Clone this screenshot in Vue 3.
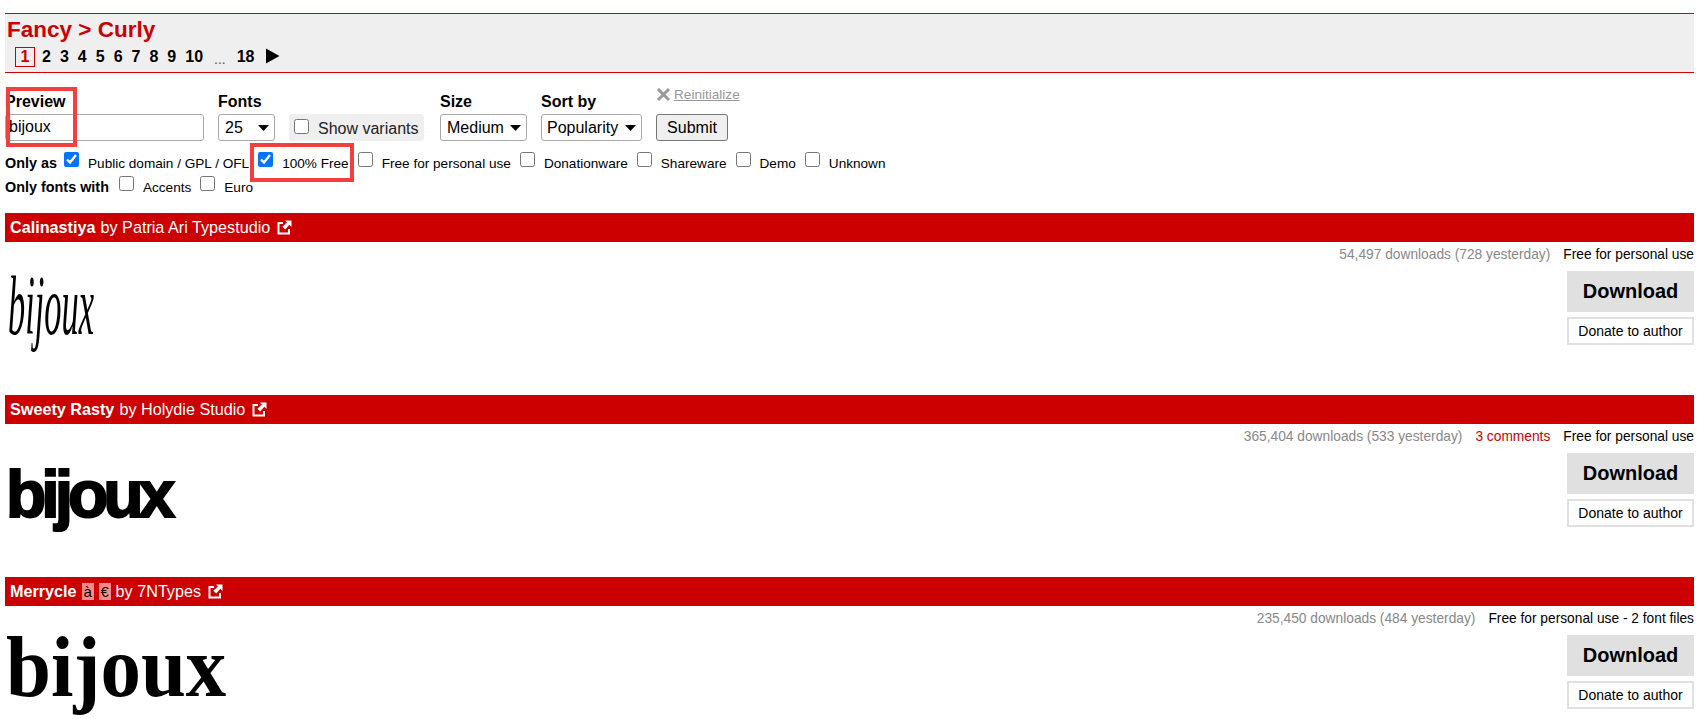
<script setup>
const pages = ["2", "3", "4", "5", "6", "7", "8", "9", "10"];

const licences = [
	{ name: "Public domain / GPL / OFL", checked: true },
	{ name: "100% Free", checked: true },
	{ name: "Free for personal use", checked: false },
	{ name: "Donationware", checked: false },
	{ name: "Shareware", checked: false },
	{ name: "Demo", checked: false },
	{ name: "Unknown", checked: false },
];

const fonts = [
	{
		name: "Calinastiya",
		author: "Patria Ari Typestudio",
		downloads: "54,497 downloads (728 yesterday)",
		licence: "Free for personal use",
		sample: "script",
	},
	{
		name: "Sweety Rasty",
		author: "Holydie Studio",
		downloads: "365,404 downloads (533 yesterday)",
		comments: "3 comments",
		licence: "Free for personal use",
		sample: "blobby",
	},
	{
		name: "Merrycle",
		author: "7NTypes",
		downloads: "235,450 downloads (484 yesterday)",
		licence: "Free for personal use - 2 font files",
		sample: "didone",
		badges: true,
	},
];
</script>

<template>
	<div class="page">
		<div class="heading">
			<div class="title">Fancy &gt; Curly</div>
			<div class="pager">
				<span class="current">1</span>
				<a v-for="p in pages" :key="p">{{ p }}</a>
				<span class="dots">...</span>
				<a>18</a>
				<svg class="next" width="15" height="16" viewBox="0 0 15 16">
					<path d="M1 0.5 L14.5 8 L1 15.5 Z" fill="#000" />
				</svg>
			</div>
		</div>

		<form class="filters" @submit.prevent>
			<div class="field preview-field">
				<label>Preview</label>
				<input class="text" type="text" value="bijoux" />
			</div>
			<div class="field fonts-field">
				<label>Fonts</label>
				<div class="inline">
					<select><option>25</option></select>
					<span class="variants"><input type="checkbox" /> Show variants</span>
				</div>
			</div>
			<div class="field size-field">
				<label>Size</label>
				<select><option>Medium</option></select>
			</div>
			<div class="field sort-field">
				<label>Sort by</label>
				<select><option>Popularity</option></select>
			</div>
			<div class="field submit-field">
				<a class="reset">
					<svg width="15" height="15" viewBox="0 0 15 15">
						<path d="M2 2 L13 13 M13 2 L2 13" stroke="#999" stroke-width="3" />
					</svg>
					<span>Reinitialize</span>
				</a>
				<button type="button">Submit</button>
			</div>
		</form>

		<div class="options">
			<b>Only as</b>
			<label v-for="l in licences" :key="l.name">
				<input type="checkbox" :checked="l.checked" />
				<span>{{ l.name }}</span>
			</label>
		</div>
		<div class="options">
			<b>Only fonts with</b>
			<label><input type="checkbox" /><span>Accents</span></label>
			<label><input type="checkbox" /><span>Euro</span></label>
		</div>

		<div class="fontlist">
			<div class="font" v-for="f in fonts" :key="f.name">
				<div class="bar">
					<b>{{ f.name }}</b>
					<template v-if="f.badges">
						<span class="badge">à</span>
						<span class="badge">€</span>
					</template>
					<span>by {{ f.author }}</span>
					<svg class="ext" width="15" height="15" viewBox="0 0 15 15">
						<path d="M6 3 H1.5 V13.5 H12 V9" fill="none" stroke="#fff" stroke-width="2" />
						<path d="M8 0.5 H14.5 V7 L12.3 4.8 L8.2 9.6 L5.4 6.8 L9.9 2.5 Z" fill="#fff" />
					</svg>
				</div>
				<div class="meta">
					<span class="downloads">{{ f.downloads }}</span>
					<a v-if="f.comments" class="comments">{{ f.comments }}</a>
					<span>{{ f.licence }}</span>
				</div>
				<div class="body">
					<div class="sample" :class="f.sample">bijoux</div>
					<div class="actions">
						<a class="download">Download</a>
						<a class="donate">Donate to author</a>
					</div>
				</div>
			</div>
		</div>

		<div class="mark mark-preview"></div>
		<div class="mark mark-free"></div>
	</div>
</template>

<style scoped>
	.page {
		position: relative;
		height: 719px;
		overflow: hidden;
		padding: 13px 10px 0 5px;
		box-sizing: border-box;
		font-family: "Liberation Sans", Arial, sans-serif;
		color: #000;
	}

	.heading {
		height: 60px;
		box-sizing: border-box;
		background: #efefef;
		border-top: 1px solid #c00;
		border-bottom: 1px solid #c00;
		padding: 3px 0 0 2px;
	}

	.title {
		font-size: 22.5px;
		font-weight: bold;
		line-height: 26px;
		color: #c00;
	}

	.pager {
		display: flex;
		align-items: center;
		height: 20px;
		margin: 4px 0 0 8px;
		font-size: 16px;
		font-weight: bold;
	}

	.pager a {
		margin-right: 9px;
	}

	.current {
		width: 20px;
		height: 20px;
		box-sizing: border-box;
		line-height: 18px;
		text-align: center;
		border: 1px solid #c00;
		color: #c00;
		margin-right: 7px;
	}

	.dots {
		font-size: 14px;
		font-weight: normal;
		color: #555;
		margin: 4px 11px 0 2px;
	}

	.next {
		margin: -3px 0 0 1px;
	}

	.filters {
		display: flex;
		margin-top: 14px;
		height: 56px;
	}

	.field {
		display: flex;
		flex-direction: column;
		align-items: flex-start;
	}

	.field label {
		font-size: 16px;
		font-weight: bold;
		line-height: 20px;
		margin-top: 5px;
		margin-bottom: 2px;
	}

	.inline {
		display: flex;
		align-items: center;
	}

	.text {
		width: 199px;
		height: 27px;
		box-sizing: border-box;
		border: 1px solid #a9a9a9;
		border-radius: 3px;
		padding: 0 3px 2px;
		font: 16px "Liberation Sans", Arial, sans-serif;
	}

	select {
		appearance: none;
		height: 27px;
		box-sizing: border-box;
		border: 1px solid #a9a9a9;
		border-radius: 3px;
		padding: 0 0 0 6px;
		background: #fff url("data:image/svg+xml,%3Csvg xmlns='http://www.w3.org/2000/svg' width='11' height='6'%3E%3Cpath d='M0 0H11L5.5 6Z'/%3E%3C/svg%3E") no-repeat right 5px center;
		font: 16px "Liberation Sans", Arial, sans-serif;
		color: #000;
	}

	.preview-field {
		width: 213px;
	}

	.fonts-field {
		width: 222px;
	}

	.fonts-field select {
		width: 57px;
	}

	.variants {
		display: flex;
		align-items: center;
		height: 27px;
		box-sizing: border-box;
		margin-left: 14px;
		padding: 3px 5px 0;
		background: #efefef;
		border-radius: 3px;
		font-size: 16px;
		color: #222;
	}

	.variants input {
		width: 15px;
		height: 15px;
		margin: 0 9px 5px 0;
	}

	.size-field {
		width: 101px;
	}

	.size-field select {
		width: 87px;
	}

	.sort-field {
		width: 115px;
	}

	.sort-field select {
		width: 101px;
		padding-left: 5px;
	}

	.reset {
		display: flex;
		align-items: center;
		gap: 3px;
		height: 20px;
		margin-top: -3px;
		margin-bottom: 10px;
		font-size: 13.6px;
		color: #999;
	}

	.reset span {
		text-decoration: underline;
	}

	button {
		width: 72px;
		height: 27px;
		padding: 0;
		box-sizing: border-box;
		border: 1px solid #767676;
		border-radius: 3px;
		background: #efefef;
		font: 16px "Liberation Sans", Arial, sans-serif;
		color: #000;
	}

	.filters + .options {
		margin-top: 8px;
	}

	.filters + .options b {
		margin-right: -2px;
	}

	.options {
		display: flex;
		align-items: center;
		height: 24px;
		font-size: 14.4px;
	}

	.options b {
		margin-right: 1px;
	}

	.options label {
		display: flex;
		align-items: center;
	}

	.options input {
		width: 15px;
		height: 15px;
		margin: 0 9px 7px 9px;
		accent-color: #0075ff;
	}

	.options span {
		font-size: 13.6px;
	}

	.fontlist {
		margin-top: 14px;
	}

	.font {
		height: 182px;
	}

	.bar {
		display: flex;
		align-items: center;
		gap: 5px;
		height: 29px;
		padding-left: 5px;
		background: #c00;
		color: #fff;
		font-size: 16.2px;
	}

	.badge {
		width: 12px;
		height: 17px;
		line-height: 17px;
		text-align: center;
		background: #f88;
		color: #000;
		font-size: 15px;
	}

	.ext {
		margin-left: 2px;
	}

	.meta {
		display: flex;
		justify-content: flex-end;
		gap: 13px;
		height: 28px;
		line-height: 26px;
		font-size: 13.75px;
	}

	.downloads {
		color: #888;
	}

	.comments {
		color: #c00;
	}

	.body {
		display: flex;
		justify-content: space-between;
	}

	.actions {
		display: flex;
		flex-direction: column;
		gap: 5px;
		width: 127px;
		margin-top: 1px;
	}

	.download {
		height: 41px;
		line-height: 41px;
		text-align: center;
		background: #e0e0e0;
		font-size: 20px;
		font-weight: bold;
	}

	.donate {
		height: 28px;
		line-height: 24px;
		box-sizing: border-box;
		text-align: center;
		border: 2px solid #e0e0e0;
		font-size: 14px;
	}

	.sample {
		color: #000;
		white-space: nowrap;
	}

	.script {
		font: italic 84px "Liberation Serif", serif;
		line-height: 100px;
		margin: -14px 0 0 3px;
		transform: scaleX(0.41);
		transform-origin: left center;
	}

	.blobby {
		font: bold 66px "Liberation Sans", sans-serif;
		line-height: 80px;
		letter-spacing: -5px;
		-webkit-text-stroke: 2px #000;
		margin: 2px 0 0 1px;
	}

	.didone {
		font: bold 87px "Liberation Serif", serif;
		line-height: 100px;
		margin: -17px 0 0 1px;
		transform: scaleX(0.93);
		transform-origin: left center;
	}

	.mark {
		position: absolute;
		border: 4px solid #f43f3f;
		box-sizing: border-box;
	}

	.mark-preview {
		left: 6px;
		top: 87px;
		width: 71px;
		height: 60px;
	}

	.mark-free {
		left: 250px;
		top: 143px;
		width: 104px;
		height: 39px;
	}
</style>
